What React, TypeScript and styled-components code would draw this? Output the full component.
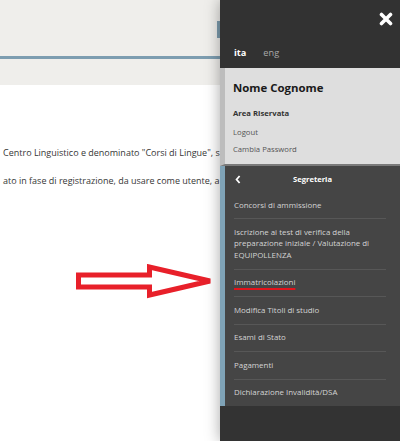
import styled, { createGlobalStyle } from 'styled-components';

const GlobalStyle = createGlobalStyle`
  html, body {
    margin: 0;
    padding: 0;
    height: 100%;
    overflow: hidden;
    background: #ffffff;
    font-family: "Open Sans", "Noto Sans", sans-serif;
  }
`;

const menuItems = [
  { label: 'Concorsi di ammissione' },
  {
    label:
      'Iscrizione ai test di verifica della preparazione iniziale / Valutazione di EQUIPOLLENZA',
  },
  { label: 'Immatricolazioni', marked: true },
  { label: 'Modifica Titoli di studio' },
  { label: 'Esami di Stato' },
  { label: 'Pagamenti' },
  { label: 'Dichiarazione Invalidità/DSA' },
];

const App = () => {
  return (
    <PageWrap>
      <GlobalStyle />
      <Header>
        <HeaderTop>
          <HeaderButton />
        </HeaderTop>
        <HeaderNav />
      </Header>

      <Content>
        <TextLine>Centro Linguistico e denominato "Corsi di Lingue", s</TextLine>
        <TextLine>ato in fase di registrazione, da usare come utente, a</TextLine>
      </Content>

      <ArrowSvg width="150" height="40" viewBox="0 0 150 40">
        <polygon
          points="3.5,11 74.5,11 74.5,3 135,17 74.5,31 74.5,23 3.5,23"
          fill="#ffffff"
          stroke="#e8202a"
          strokeWidth="5"
          strokeLinejoin="miter"
        />
      </ArrowSvg>

      <Drawer>
        <DrawerTop>
          <CloseBtn aria-label="chiudi">
            <svg width="14" height="14" viewBox="0 0 14 14">
              <path
                d="M2.5 2.5 L11.5 11.5 M11.5 2.5 L2.5 11.5"
                stroke="#ffffff"
                strokeWidth="3.6"
                strokeLinecap="round"
              />
            </svg>
          </CloseBtn>
          <LangRow>
            <Lang $active>ita</Lang>
            <Lang>eng</Lang>
          </LangRow>
        </DrawerTop>

        <UserBox>
          <UserName>Nome Cognome</UserName>
          <AreaTitle>Area Riservata</AreaTitle>
          <UserLinks>
            <UserLink>Logout</UserLink>
            <UserLink>Cambia Password</UserLink>
          </UserLinks>
        </UserBox>

        <Menu>
          <MenuHeader>
            <BackIcon width="6" height="9" viewBox="0 0 6 9">
              <path
                d="M4.6 1 L1.6 4.5 L4.6 8"
                fill="none"
                stroke="#ffffff"
                strokeWidth="1.8"
              />
            </BackIcon>
            <MenuTitle>Segreteria</MenuTitle>
          </MenuHeader>
          <MenuList>
            {menuItems.map((item) => (
              <MenuItem key={item.label}>
                {item.marked ? <Marked>{item.label}</Marked> : item.label}
              </MenuItem>
            ))}
          </MenuList>
        </Menu>
        <DrawerRest />
      </Drawer>
    </PageWrap>
  );
};

export default App;

const PageWrap = styled.div`
  position: relative;
  width: 100%;
  height: 100vh;
  overflow: hidden;
`;

const Header = styled.header`
  background: #efeeeb;
`;

const HeaderTop = styled.div`
  height: 56px;
  padding-top: 21px;
  box-sizing: border-box;
`;

const HeaderButton = styled.div`
  margin-left: 217px;
  width: 30px;
  height: 17px;
  background: #7d9cae;
`;

const HeaderNav = styled.div`
  height: 26px;
  border-top: 3px solid #7d9db0;
`;

const Content = styled.div`
  width: 220px;
  overflow: hidden;
  padding: 61px 0 0 3px;
  box-sizing: border-box;
`;

const TextLine = styled.p`
  margin: 0 0 14px;
  white-space: nowrap;
  font-size: 9px;
  line-height: 14px;
  color: #363636;
`;

const ArrowSvg = styled.svg`
  position: absolute;
  left: 75px;
  top: 264px;
`;

const Drawer = styled.aside`
  position: absolute;
  top: 0;
  right: 0;
  width: 180px;
  height: 100%;
  display: flex;
  flex-direction: column;
  background: #333333;
  box-shadow: 0 0 14px rgba(0, 0, 0, 0.35);
`;

const DrawerTop = styled.div`
  height: 68px;
  box-sizing: border-box;
  padding: 12px 7px 8px 14px;
  display: flex;
  flex-direction: column;
  justify-content: space-between;
  background: #323232;
`;

const CloseBtn = styled.button`
  align-self: flex-end;
  width: 14px;
  height: 14px;
  padding: 0;
  border: 0;
  background: none;
  display: flex;
`;

const LangRow = styled.div`
  display: flex;
  gap: 17px;
`;

const Lang = styled.span<{ $active?: boolean }>`
  font-size: 9.2px;
  line-height: 14px;
  font-weight: ${(p) => (p.$active ? 700 : 400)};
  color: ${(p) => (p.$active ? '#ffffff' : '#a9a9a9')};
`;

const UserBox = styled.div`
  background: #dedede;
  border-left: 5px solid #bdbdbd;
  border-bottom: 2px solid #7a7a7a;
  padding: 12px 8px 6.5px;
  color: #222;
`;

const UserName = styled.div`
  font-size: 11.4px;
  line-height: 16px;
  font-weight: 700;
  color: #1a1a1a;
`;

const AreaTitle = styled.div`
  margin-top: 11px;
  font-size: 7.7px;
  line-height: 12px;
  font-weight: 700;
  color: #333;
`;

const UserLinks = styled.div`
  margin-top: 4.5px;
  display: flex;
  flex-direction: column;
`;

const UserLink = styled.span`
  font-size: 7.7px;
  line-height: 17px;
  color: #555;
`;

const Menu = styled.nav`
  background: #454545;
  border-left: 5px solid #7fa3b7;
`;

const MenuHeader = styled.div`
  position: relative;
  height: 26px;
  display: flex;
  align-items: center;
  justify-content: center;
`;

const BackIcon = styled.svg`
  position: absolute;
  left: 10px;
  top: 8.5px;
`;

const MenuTitle = styled.span`
  font-size: 7.6px;
  font-weight: 700;
  color: #ffffff;
`;

const MenuList = styled.ul`
  list-style: none;
  margin: 0 14px 0 9px;
  padding: 0;
`;

const MenuItem = styled.li`
  padding: 7.6px 0;
  font-size: 7.9px;
  line-height: 11.3px;
  color: #d4d4d4;
  border-bottom: 1px solid #575757;

  &:last-child {
    border-bottom: 0;
  }
`;

const Marked = styled.span`
  text-decoration: underline;
  text-decoration-color: #e3141c;
  text-decoration-thickness: 2px;
  text-underline-offset: 3px;
`;

const DrawerRest = styled.div`
  flex: 1;
  background: #333333;
`;
